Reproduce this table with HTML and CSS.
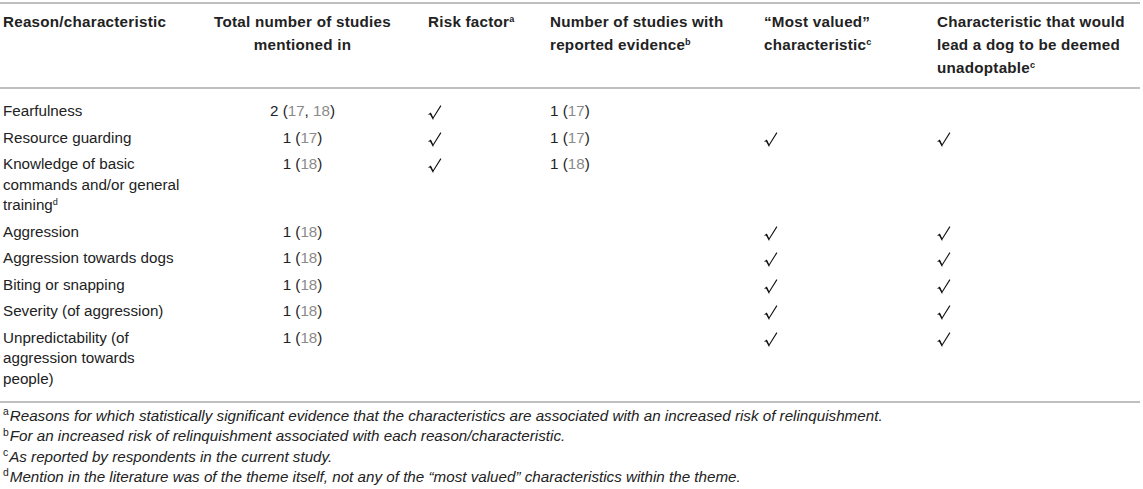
FILE: index.html
```html
<!DOCTYPE html>
<html lang="en">
<head>
  <meta charset="UTF-8" />
  <title>Reasons and characteristics</title>
  <link rel="stylesheet" href="styles.css">
</head>
<body>
  <svg width="0" height="0" class="defs">
    <symbol id="tick" viewBox="0 0 14 16">
      <path d="M0.6 9.6 L2.6 8.4 L5 13.2 L12.9 0.6" fill="none" stroke="#111" stroke-width="1.1" stroke-linejoin="miter"/>
      <path d="M1.8 9 L4.8 14.6 L5.6 14.6 L2.9 8.4 Z" fill="#111"/>
    </symbol>
  </svg>

  <table class="data">
    <colgroup>
      <col class="c-reason">
      <col class="c-total">
      <col class="c-risk">
      <col class="c-evid">
      <col class="c-valued">
      <col class="c-unadopt">
    </colgroup>
    <thead>
      <tr>
        <th>Reason/characteristic</th>
        <th class="mid">Total number of studies mentioned in</th>
        <th>Risk factor<sup>a</sup></th>
        <th>Number of studies with reported evidence<sup>b</sup></th>
        <th>“Most valued” characteristic<sup>c</sup></th>
        <th>Characteristic that would lead a dog to be deemed unadoptable<sup>c</sup></th>
      </tr>
    </thead>
    <tbody>
      <tr class="first">
        <td>Fearfulness</td>
        <td class="mid">2 (<span class="ref">17</span>, <span class="ref">18</span>)</td>
        <td><svg class="tick"><use href="#tick"/></svg></td>
        <td>1 (<span class="ref">17</span>)</td>
        <td></td>
        <td></td>
      </tr>
      <tr>
        <td>Resource guarding</td>
        <td class="mid">1 (<span class="ref">17</span>)</td>
        <td><svg class="tick"><use href="#tick"/></svg></td>
        <td>1 (<span class="ref">17</span>)</td>
        <td><svg class="tick"><use href="#tick"/></svg></td>
        <td><svg class="tick"><use href="#tick"/></svg></td>
      </tr>
      <tr>
        <td>Knowledge of basic commands and/or general training<sup>d</sup></td>
        <td class="mid">1 (<span class="ref">18</span>)</td>
        <td><svg class="tick"><use href="#tick"/></svg></td>
        <td>1 (<span class="ref">18</span>)</td>
        <td></td>
        <td></td>
      </tr>
      <tr>
        <td>Aggression</td>
        <td class="mid">1 (<span class="ref">18</span>)</td>
        <td></td>
        <td></td>
        <td><svg class="tick"><use href="#tick"/></svg></td>
        <td><svg class="tick"><use href="#tick"/></svg></td>
      </tr>
      <tr>
        <td>Aggression towards dogs</td>
        <td class="mid">1 (<span class="ref">18</span>)</td>
        <td></td>
        <td></td>
        <td><svg class="tick"><use href="#tick"/></svg></td>
        <td><svg class="tick"><use href="#tick"/></svg></td>
      </tr>
      <tr>
        <td>Biting or snapping</td>
        <td class="mid">1 (<span class="ref">18</span>)</td>
        <td></td>
        <td></td>
        <td><svg class="tick"><use href="#tick"/></svg></td>
        <td><svg class="tick"><use href="#tick"/></svg></td>
      </tr>
      <tr>
        <td>Severity (of aggression)</td>
        <td class="mid">1 (<span class="ref">18</span>)</td>
        <td></td>
        <td></td>
        <td><svg class="tick"><use href="#tick"/></svg></td>
        <td><svg class="tick"><use href="#tick"/></svg></td>
      </tr>
      <tr class="last">
        <td>Unpredictability (of aggression towards people)</td>
        <td class="mid">1 (<span class="ref">18</span>)</td>
        <td></td>
        <td></td>
        <td><svg class="tick"><use href="#tick"/></svg></td>
        <td><svg class="tick"><use href="#tick"/></svg></td>
      </tr>
    </tbody>
  </table>

  <div class="notes">
    <p><sup>a</sup>Reasons for which statistically significant evidence that the characteristics are associated with an increased risk of relinquishment.</p>
    <p><sup>b</sup>For an increased risk of relinquishment associated with each reason/characteristic.</p>
    <p><sup>c</sup>As reported by respondents in the current study.</p>
    <p><sup>d</sup>Mention in the literature was of the theme itself, not any of the “most valued” characteristics within the theme.</p>
  </div>
</body>
</html>
```

FILE: styles.css
```css
:root {
  --ink: #222;
  --ref: #8a8a8a;
  --rule: #bfbfbf;
  font-family: 'Liberation Sans', Arial, sans-serif;
}
* { box-sizing: border-box; margin: 0; padding: 0; }
body { background: #fff; color: var(--ink); padding-top: 2px; }
.defs { position: absolute; }

.data {
  width: 1140px;
  table-layout: fixed;
  border-collapse: collapse;
  font-size: 15.2px;
  border-top: 2px solid var(--rule);
  border-bottom: 2px solid var(--rule);
}
.c-reason { width: 187px; }
.c-total { width: 238px; }
.c-risk { width: 122px; }
.c-evid { width: 214px; }
.c-valued { width: 173px; }
.c-unadopt { width: 206px; }

th, td {
  text-align: left;
  vertical-align: top;
  padding: 3px 0 3px 3px;
  line-height: 20.5px;
  height: 26px;
}
th {
  font-weight: bold;
  letter-spacing: 0.25px;
  line-height: 23px;
  padding-top: 6px;
  padding-bottom: 8px;
  border-bottom: 2px solid var(--rule);
}
.mid { text-align: center; padding-right: 10px; }
.first td { padding-top: 12px; height: 35.5px; }
.last td { padding-bottom: 12px; }

sup { font-size: 0.6em; line-height: 0; vertical-align: 0.55em; }
.ref { color: var(--ref); }
.tick {
  width: 14px;
  height: 16px;
  vertical-align: -5px;
}

.notes { padding: 3px 0 0 3px; }
.notes p {
  font-size: 15.2px;
  font-style: italic;
  line-height: 20.3px;
}
.notes sup { font-size: 0.68em; margin-right: 1px; font-style: normal; }
```
